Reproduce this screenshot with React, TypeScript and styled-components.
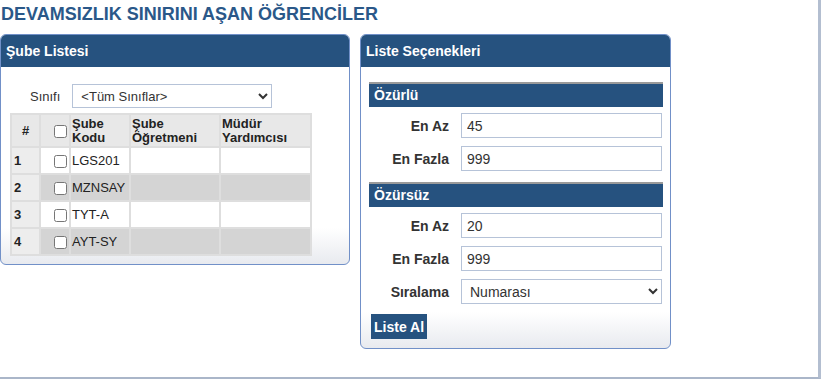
import React from 'react';
import styled, { createGlobalStyle } from 'styled-components';

const FONT = `"Liberation Sans", Arial, Helvetica, sans-serif`;

const GlobalStyle = createGlobalStyle`
  html, body {
    margin: 0;
    padding: 0;
    background: #ffffff;
    font-family: ${FONT};
    color: #222222;
  }
`;

const Page = styled.div`
  box-sizing: border-box;
  width: 821px;
  height: 379px;
  border-right: 3px solid #b3bed0;
  border-bottom: 2px solid #aab6c9;
  overflow: hidden;
`;

const Title = styled.h1`
  margin: 0;
  padding: 4px 0 0 1px;
  height: 34px;
  box-sizing: border-box;
  font-family: ${FONT};
  font-size: 18px;
  line-height: 21px;
  font-weight: bold;
  color: #2a5889;
`;

const Columns = styled.div`
  display: flex;
  align-items: flex-start;
  gap: 10px;
`;

const Panel = styled.section<{ $width: number }>`
  box-sizing: border-box;
  width: ${(p) => p.$width}px;
  border: 1px solid #7190c8;
  border-radius: 6px;
  background: linear-gradient(to bottom, #ffffff calc(100% - 36px), #e8eaef 100%);
  overflow: hidden;
`;

const PanelHeader = styled.div`
  height: 32px;
  background: #26527f;
  color: #ffffff;
  font-weight: bold;
  font-size: 14px;
  line-height: 32px;
  padding-left: 5px;
`;

const ListBody = styled.div`
  padding: 17px 9px 8px 9px;
`;

const FilterRow = styled.div`
  display: flex;
  align-items: center;
  gap: 12px;
  padding-left: 20px;
  margin-bottom: 5px;
`;

const Label = styled.label`
  font-size: 13px;
  color: #333333;
`;

const Select = styled.select`
  box-sizing: border-box;
  width: 200px;
  height: 24px;
  font-family: ${FONT};
  font-size: 13px;
  color: #333333;
  border: 1px solid #b6c3d8;
  border-radius: 0;
  background: #ffffff;
  padding: 0 4px;
`;

const Table = styled.table`
  width: 300px;
  border-collapse: collapse;
  font-size: 13px;
  table-layout: fixed;
`;

const Th = styled.th<{ $w: number; $center?: boolean }>`
  width: ${(p) => p.$w}px;
  height: 33px;
  box-sizing: border-box;
  background: #e8e8e8;
  border: 2px solid #dedede;
  text-align: ${(p) => (p.$center ? 'center' : 'left')};
  vertical-align: middle;
  font-weight: bold;
  line-height: 14px;
  padding: 0 1px;
  color: #222222;
`;

const CheckTh = styled(Th)`
  text-align: right;
  padding: 0;
`;

const Row = styled.tr<{ $alt: boolean }>`
  background: ${(p) => (p.$alt ? '#d4d4d4' : '#ffffff')};
`;

const NumCell = styled.td`
  height: 27px;
  box-sizing: border-box;
  background: #ededed;
  border: 2px solid #dedede;
  font-weight: bold;
  padding: 0 2px;
`;

const Cell = styled.td`
  box-sizing: border-box;
  border: 2px solid #dedede;
  padding: 0 1px;
  color: #222222;
`;

const CheckCell = styled(Cell)`
  text-align: right;
  padding: 0;
`;

const Check = styled.input.attrs({ type: 'checkbox' })`
  margin: 0 2px 0 0;
  width: 13px;
  height: 13px;
  vertical-align: middle;
`;

const OptionsBody = styled.div`
  padding: 15px 7px 9px 8px;
`;

const SectionBar = styled.div<{ $first?: boolean }>`
  height: 25px;
  border-top: 2px solid #9a9a9a;
  background: #26527f;
  color: #ffffff;
  font-weight: bold;
  font-size: 14px;
  line-height: 23px;
  padding-left: 5px;
  margin-top: ${(p) => (p.$first ? '0' : '11px')};
  box-sizing: border-box;
`;

const FormGrid = styled.div`
  display: grid;
  grid-template-columns: 80px 201px;
  column-gap: 12px;
  row-gap: 8px;
  align-items: center;
  padding-top: 6px;
`;

const FieldLabel = styled.label`
  text-align: right;
  font-weight: bold;
  font-size: 14px;
  color: #333333;
`;

const Input = styled.input`
  box-sizing: border-box;
  width: 201px;
  height: 25px;
  border: 1px solid #b6c3d8;
  padding: 0 5px;
  font-family: ${FONT};
  font-size: 14px;
  color: #333333;
`;

const FormSelect = styled(Select)`
  width: 201px;
  height: 25px;
  font-size: 14px;
`;

const Button = styled.button`
  margin: 10px 0 0 2px;
  height: 25px;
  padding: 0 3px;
  border: none;
  background: #26527f;
  color: #ffffff;
  font-family: ${FONT};
  font-weight: bold;
  font-size: 14px;
`;

const branches = ['LGS201', 'MZNSAY', 'TYT-A', 'AYT-SY'];

const App = () => (
  <Page>
    <GlobalStyle />
    <Title>DEVAMSIZLIK SINIRINI AŞAN ÖĞRENCİLER</Title>
    <Columns>
      <Panel $width={350}>
        <PanelHeader>Şube Listesi</PanelHeader>
        <ListBody>
          <FilterRow>
            <Label>Sınıfı</Label>
            <Select defaultValue="all">
              <option value="all">&lt;Tüm Sınıflar&gt;</option>
            </Select>
          </FilterRow>
          <Table>
            <thead>
              <tr>
                <Th $w={29} $center>#</Th>
                <CheckTh $w={30}>
                  <Check />
                </CheckTh>
                <Th $w={60}>Şube<br />Kodu</Th>
                <Th $w={90}>Şube<br />Öğretmeni</Th>
                <Th $w={91}>Müdür<br />Yardımcısı</Th>
              </tr>
            </thead>
            <tbody>
              {branches.map((code, i) => (
                <Row key={code} $alt={i % 2 === 1}>
                  <NumCell>{i + 1}</NumCell>
                  <CheckCell>
                    <Check />
                  </CheckCell>
                  <Cell>{code}</Cell>
                  <Cell />
                  <Cell />
                </Row>
              ))}
            </tbody>
          </Table>
        </ListBody>
      </Panel>
      <Panel $width={311}>
        <PanelHeader>Liste Seçenekleri</PanelHeader>
        <OptionsBody>
          <SectionBar $first>Özürlü</SectionBar>
          <FormGrid>
            <FieldLabel>En Az</FieldLabel>
            <Input defaultValue="45" />
            <FieldLabel>En Fazla</FieldLabel>
            <Input defaultValue="999" />
          </FormGrid>
          <SectionBar>Özürsüz</SectionBar>
          <FormGrid>
            <FieldLabel>En Az</FieldLabel>
            <Input defaultValue="20" />
            <FieldLabel>En Fazla</FieldLabel>
            <Input defaultValue="999" />
            <FieldLabel>Sıralama</FieldLabel>
            <FormSelect defaultValue="num">
              <option value="num">Numarası</option>
            </FormSelect>
          </FormGrid>
          <Button>Liste Al</Button>
        </OptionsBody>
      </Panel>
    </Columns>
  </Page>
);

export default App;
